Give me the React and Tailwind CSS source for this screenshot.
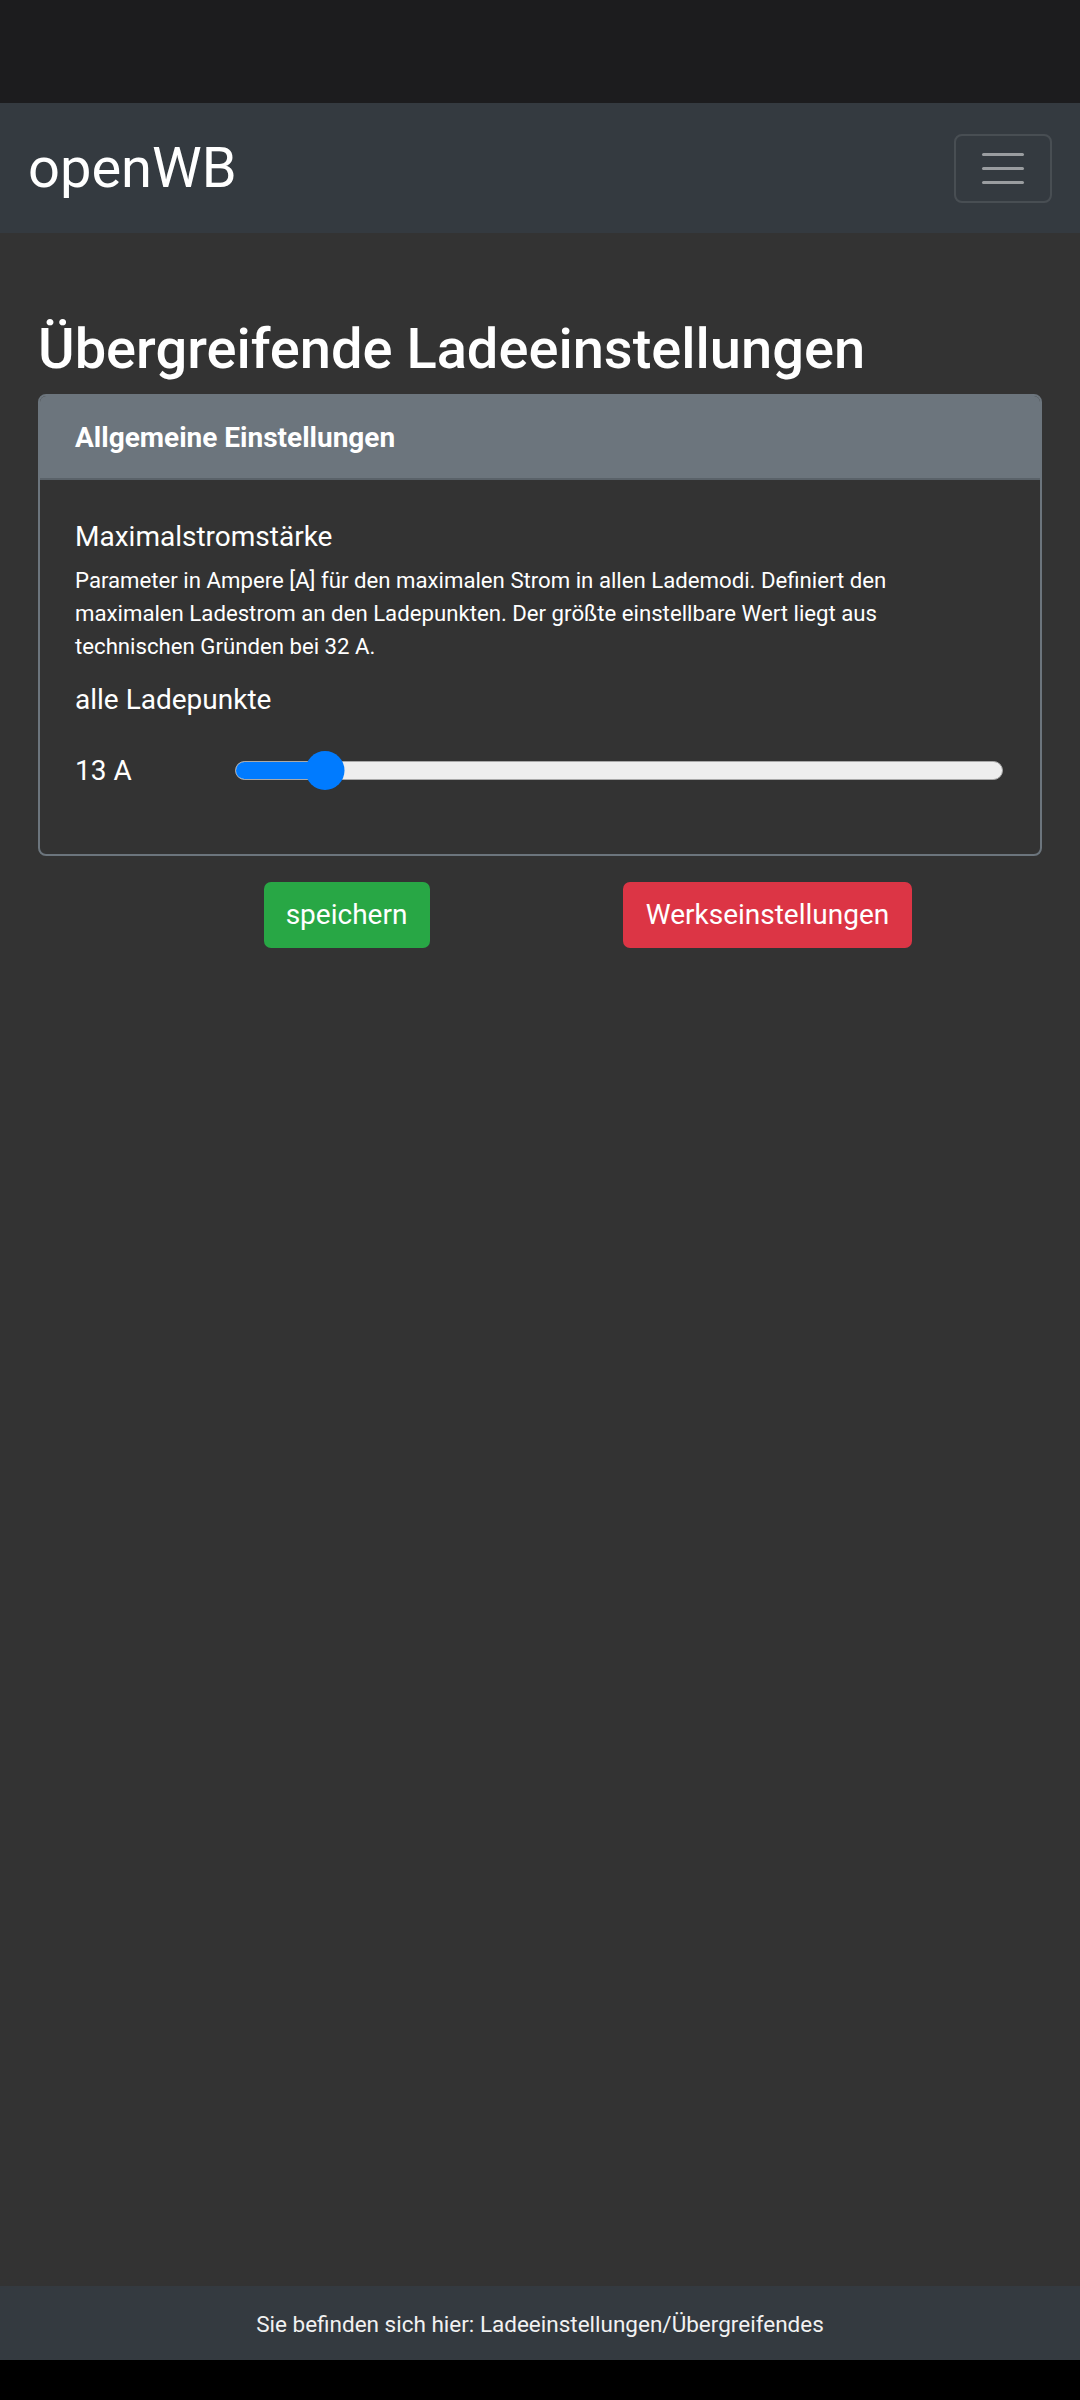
import React from 'react';

const Navbar = () => (
  <nav className="h-[130px] bg-[#343a40] flex items-center justify-between pl-[28px] pr-[28px]">
    <span className="text-[56px] leading-none text-white">openWB</span>
    <button className="w-[98px] h-[69px] border-2 border-white/10 rounded-[8px] flex flex-col items-center justify-center gap-[11px]">
      <span className="block w-[42px] h-[3px] rounded-full bg-white/50" />
      <span className="block w-[42px] h-[3px] rounded-full bg-white/50" />
      <span className="block w-[42px] h-[3px] rounded-full bg-white/50" />
    </button>
  </nav>
);

const RangeSlider = ({ value, min, max }) => {
  const pct = ((value - min) / (max - min)) * 100;
  return (
    <div className="relative flex-1 h-[39px] flex items-center">
      <div className="w-full h-[19px] rounded-full bg-[#eeeeee] border border-[#a9a9a9] overflow-hidden">
        <div className="h-full bg-[#007bff]" style={{ width: `${pct}%` }} />
      </div>
      <div
        className="absolute top-0 w-[39px] h-[39px] rounded-full bg-[#007bff] -translate-x-1/2"
        style={{ left: `${pct}%` }}
      />
    </div>
  );
};

export default function App() {
  return (
    <div className="h-[2400px] flex flex-col bg-[#333333] font-['Roboto',sans-serif] text-white">
      {/* status bar */}
      <div className="h-[103px] bg-[#1c1c1e]" />
      <Navbar />

      <main className="flex-1 px-[38px]">
        <h1 className="mt-[83px] mb-[11px] text-[56px] leading-[1.2] font-medium">Übergreifende Ladeeinstellungen</h1>

        <div className="border-2 border-[#6c757d] rounded-[8px] overflow-hidden">
          <div className="h-[84px] bg-[#6c757d] border-b-2 border-[#5a6269] flex items-center px-[35px] pt-[2px]">
            <span className="text-[28px] font-bold">Allgemeine Einstellungen</span>
          </div>
          <div className="px-[35px] pt-[37px] pb-[64px]">
            <div className="text-[28px] leading-[39px]">Maximalstromstärke</div>
            <p className="mt-[8px] text-[22.2px] leading-[33px]">
              Parameter in Ampere [A] für den maximalen Strom in allen Lademodi. Definiert den
              <br />
              maximalen Ladestrom an den Ladepunkten. Der größte einstellbare Wert liegt aus
              <br />
              technischen Gründen bei 32 A.
            </p>
            <div className="mt-[17px] text-[28px] leading-[39px]">alle Ladepunkte</div>
            <div className="mt-[32px] flex items-center pr-[2px]">
              <span className="w-[160px] shrink-0 text-[28px] leading-[39px]">13 A</span>
              <RangeSlider value={13} min={6} max={66} />
            </div>
          </div>
        </div>

        <div className="mt-[26px] ml-[98px] w-[842px] grid grid-cols-2 justify-items-center">
          <button className="w-[166px] h-[66px] rounded-[7px] bg-[#28a745] text-[28px] text-white">speichern</button>
          <button className="w-[289px] h-[66px] rounded-[7px] bg-[#dc3545] text-[28px] text-white">Werkseinstellungen</button>
        </div>
      </main>

      <footer className="h-[74px] bg-[#343a40] flex items-center justify-center pt-[4px]">
        <span className="text-[22.5px] text-[#f1f1f1]">Sie befinden sich hier: Ladeeinstellungen/Übergreifendes</span>
      </footer>
      <div className="h-[40px] bg-black" />
    </div>
  );
}
